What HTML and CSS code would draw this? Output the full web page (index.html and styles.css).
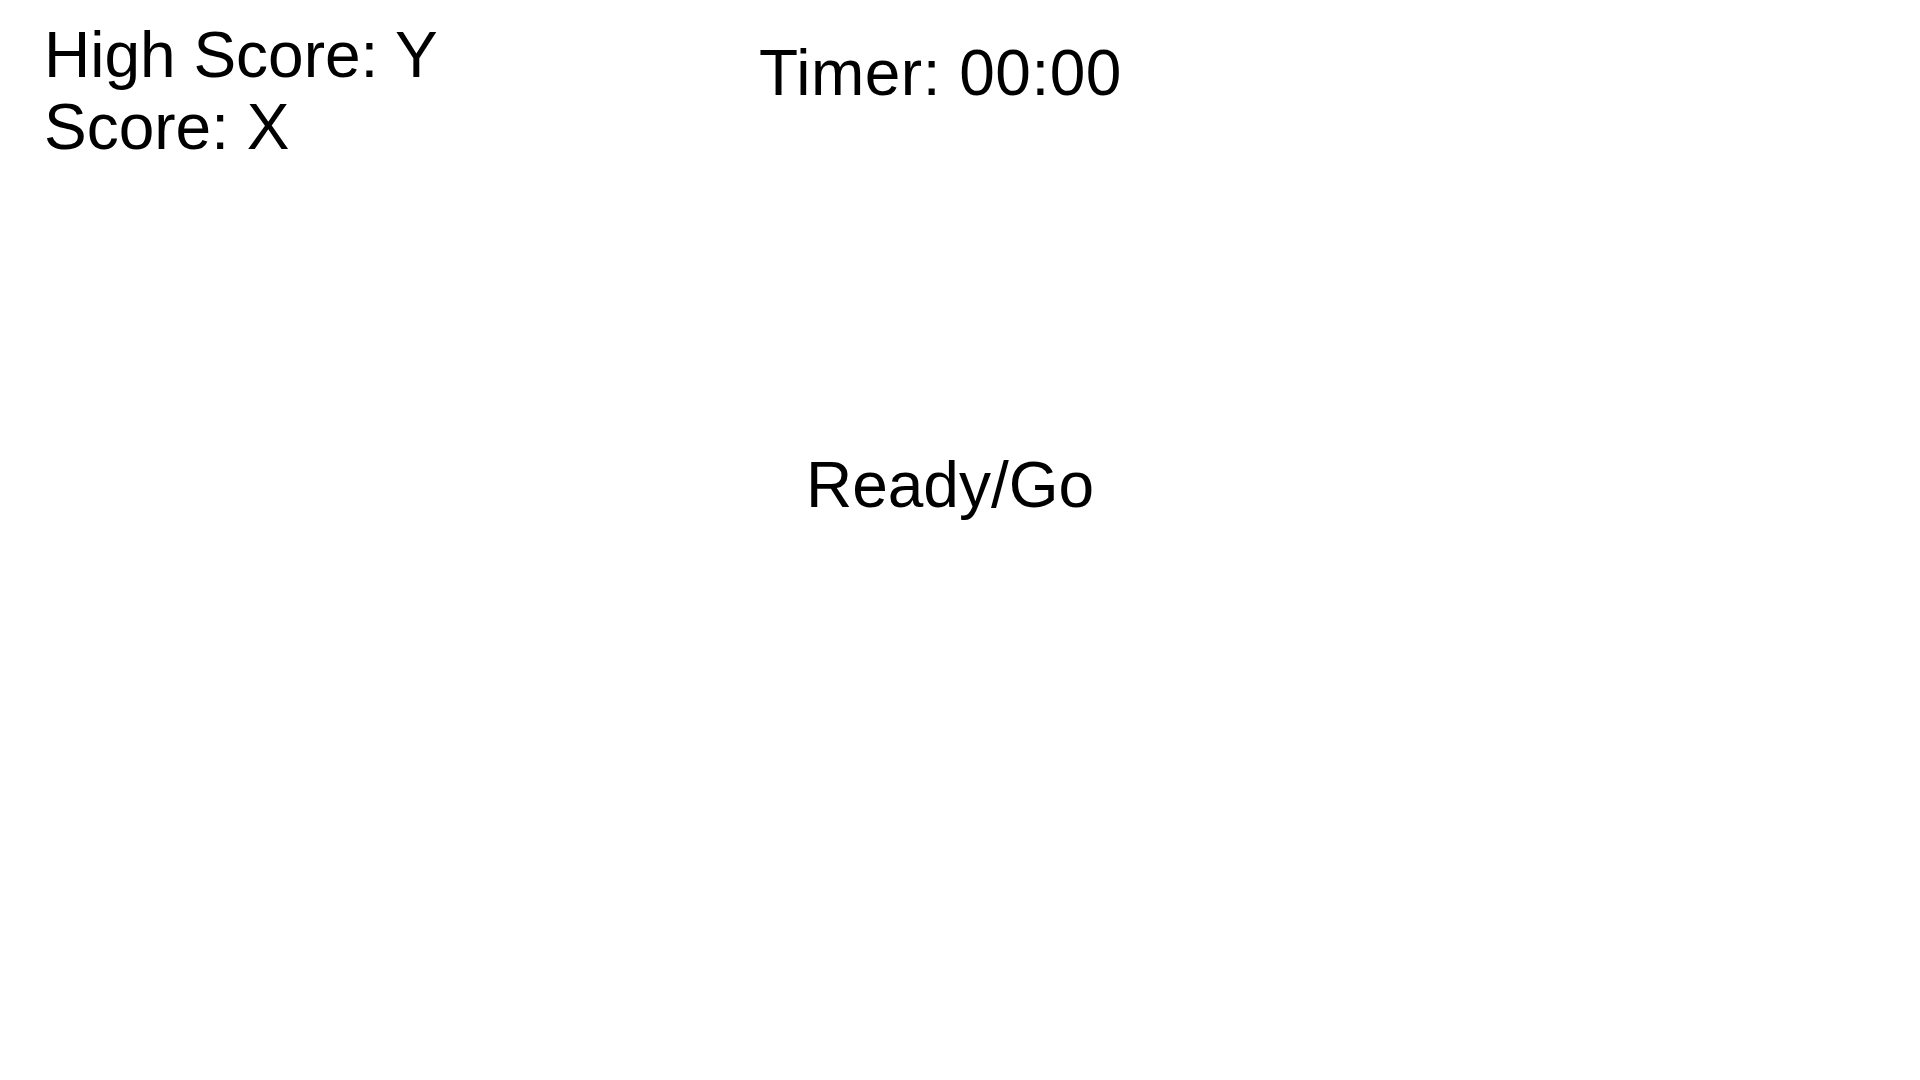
FILE: index.html
```html
<!DOCTYPE html>
<html lang="en">
<head>
  <meta charset="UTF-8" />
  <title>Game</title>
  <link rel="stylesheet" href="styles.css">
</head>
<body>
  <div id="hud">
    <div id="scores">
      <div id="high-score">High Score: Y</div>
      <div id="score">Score: X</div>
    </div>
    <div id="timer">Timer: 00:00</div>
  </div>

  <div id="stage">
    <div id="status">Ready/Go</div>
  </div>
</body>
</html>
```

FILE: styles.css
```css
html, body {
  margin: 0;
  height: 100%;
}
body {
  background: #ffffff;
  color: #000000;
  font-family: "Liberation Sans", Arial, sans-serif;
  font-size: 64px;
  line-height: 72px;
}
#hud {
  display: flex;
  flex-direction: row;
  align-items: flex-start;
  padding: 19px 0 0 44px;
}
#scores {
  width: 715px;
}
#timer {
  margin-top: 18px;
  letter-spacing: 0.5px;
}
#stage {
  display: flex;
  justify-content: center;
  padding-right: 20px;
  padding-top: 286px;
}
#status {
  text-align: center;
}
```
